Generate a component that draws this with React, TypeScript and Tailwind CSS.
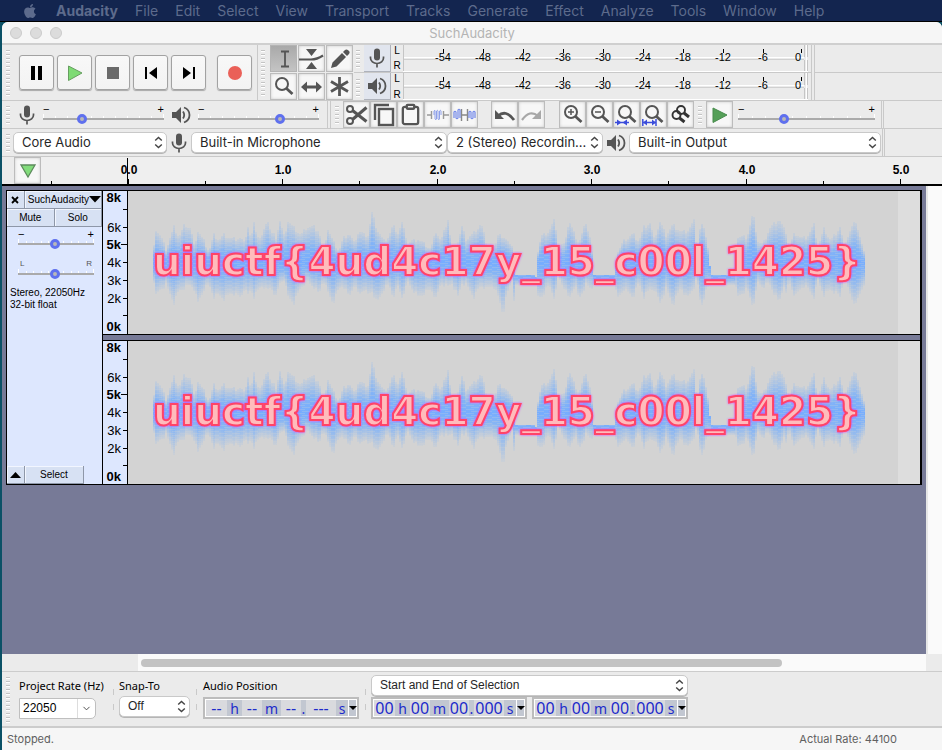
import type { ReactNode } from 'react';
import { Clipboard, ChevronDown } from 'lucide-react';
import { FaApple } from 'react-icons/fa';

const DARK = '#555555';

/* ---------- small shared pieces ---------- */

function Grip({ rows }: { rows: number }) {
  return (
    <div aria-hidden className="flex w-1 shrink-0 flex-col justify-center gap-[3px]">
      {Array.from({ length: rows }, (_, i) => (
        <span key={i} className="h-px w-1 bg-[#c4c4c4] shadow-[0_1px_0_#ffffff]" />
      ))}
    </div>
  );
}

function ToolButton({ label, active, children }: { label: string; active?: boolean; children: ReactNode }) {
  return (
    <button
      type="button"
      aria-label={label}
      className={`flex h-[27px] w-[27px] shrink-0 items-center justify-center border ${
        active
          ? 'border-[#b4b4b4] bg-linear-to-b from-[#a9a9a9] to-[#c4c4c4]'
          : 'border-[#bcbcbc] bg-[#f7f7f7] shadow-[inset_0_0_3px_#c8c8c8]'
      }`}
    >
      {children}
    </button>
  );
}

function TransportButton({ label, children }: { label: string; children: ReactNode }) {
  return (
    <button
      type="button"
      aria-label={label}
      className="flex h-[35px] w-[35px] shrink-0 items-center justify-center rounded-[3px] border border-[#a2a2a2] bg-linear-to-b from-[#f8f8f8] to-[#f3f3f3] shadow-[0_1px_1px_#a8a8a8]"
    >
      <svg width="20" height="20" viewBox="0 0 20 20">{children}</svg>
    </button>
  );
}

function Slider({
  label, value, ticks, low = '−', high = '+', small,
}: { label: string; value: number; ticks: number; low?: string; high?: string; small?: boolean }) {
  return (
    <div className="flex min-w-0 flex-1 flex-col">
      <div
        aria-hidden
        className={`flex h-[10px] justify-between leading-[10px] ${
          small ? 'px-[2px] text-[8px] text-[#555555]' : 'text-[11px] text-black'
        }`}
      >
        <span>{low}</span>
        <span>{high}</span>
      </div>
      <div aria-hidden className="flex h-1 items-end justify-between">
        {Array.from({ length: ticks }, (_, i) => (
          <span key={i} className={`w-px bg-white ${i === 0 || i === ticks - 1 ? 'h-1' : 'h-[2px]'}`} />
        ))}
      </div>
      <input
        type="range"
        aria-label={label}
        defaultValue={value}
        className="-mt-[5px] block h-[12px] w-full appearance-none bg-transparent [&::-webkit-slider-runnable-track]:h-[2px] [&::-webkit-slider-runnable-track]:bg-[#aaaaaa] [&::-webkit-slider-thumb]:-mt-[4px] [&::-webkit-slider-thumb]:h-[10px] [&::-webkit-slider-thumb]:w-[10px] [&::-webkit-slider-thumb]:appearance-none [&::-webkit-slider-thumb]:rounded-full [&::-webkit-slider-thumb]:border-[3px] [&::-webkit-slider-thumb]:border-[#5f70ee] [&::-webkit-slider-thumb]:bg-[#b8b8b8]"
      />
    </div>
  );
}

function Picker({ label, value, font, className }: { label: string; value: string; font: string; className: string }) {
  return (
    <div className={`relative ${className}`}>
      <select
        aria-label={label}
        className={`block h-[21px] w-full appearance-none rounded-[5px] border border-[#c9c9c9] bg-white pr-4 pl-2 text-[#262626] shadow-[0_1px_0_#b5b5b5] ${font}`}
      >
        <option>{value}</option>
      </select>
      <svg className="pointer-events-none absolute top-[4px] right-1" width="9" height="13" viewBox="0 0 9 13" fill="none" stroke="#444444" strokeWidth="1.4">
        <path d="M1.2 4.6 4.5 1.4 7.8 4.6M1.2 8.4 4.5 11.6 7.8 8.4" />
      </svg>
    </div>
  );
}

function SpeakerIcon({ size = 20 }: { size?: number }) {
  return (
    <svg width={size} height={size} viewBox="0 0 20 20" fill="none" stroke={DARK} className="shrink-0">
      <path d="M1 7h4l5-5v16l-5-5H1z" fill={DARK} stroke="none" />
      <path d="M12 6.5q2.4 3.5 0 7" strokeWidth="1.8" />
      <path d="M13 2.5q5.500 2 5.500 7.500t-5.500 7.500" strokeWidth="1.8" />
    </svg>
  );
}

function MicIcon() {
  return (
    <svg width="18" height="20" viewBox="0 0 18 20" fill="none" stroke={DARK} className="shrink-0">
      <rect x="6" y="0.500" width="6" height="12" rx="3" fill={DARK} stroke="none" />
      <path d="M2.500 8.500v1.500a6.500 5.500 0 0 0 13 0V8.500M9 15.500v4" strokeWidth="1.7" />
    </svg>
  );
}

function Magnifier({ children }: { children?: ReactNode }) {
  return (
    <svg width="23" height="23" viewBox="0 0 23 23" fill="none" stroke={DARK}>
      <circle cx="10" cy="9" r="6" strokeWidth="2" />
      <path d="m14.500 13.500 6 5.500" strokeWidth="2.8" />
      {children}
    </svg>
  );
}

/* ---------- menu and title ---------- */

const MENUS = ['File', 'Edit', 'Select', 'View', 'Transport', 'Tracks', 'Generate', 'Effect', 'Analyze', 'Tools', 'Window', 'Help'];

function MenuBar() {
  return (
    <nav className="flex h-[22px] shrink-0 items-center gap-[17px] border-b border-black bg-[#13254f] pl-[22px] font-['Inter',sans-serif] text-sm leading-5 text-[#5d6b8c]">
      <button type="button" aria-label="System menu" className="w-[17px]"><FaApple size={16} /></button>
      <button type="button" className="font-bold">Audacity</button>
      {MENUS.map((m) => <button type="button" key={m}>{m}</button>)}
    </nav>
  );
}

function TitleBar() {
  return (
    <header className="grid h-[23px] shrink-0 grid-cols-3 items-center rounded-t-md border-b-2 border-[#cfcfcf] bg-[#f6f6f6]">
      <div className="flex gap-2 pl-2">
        {['Close', 'Minimize', 'Zoom'].map((n) => (
          <button type="button" key={n} aria-label={`${n} window`} className="h-3 w-3 rounded-full border border-[#cbcbcb] bg-[#dcdcdc]" />
        ))}
      </div>
      <h1 className="text-center font-['Inter',sans-serif] text-[13px] leading-5 text-[#b4b4b4]">SuchAudacity</h1>
    </header>
  );
}

/* ---------- toolbars ---------- */

const DB = [-54, -48, -42, -36, -30, -24, -18, -12, -6];

function Meter({ label, children }: { label: string; children: ReactNode }) {
  return (
    <div className="flex h-7 border-b border-[#c9c9c9] pl-[2px] last:border-b-0">
      <Grip rows={5} />
      <button type="button" aria-label={label} className="ml-1 flex h-[27px] w-[27px] items-center justify-center border-r border-b border-[#aeb2bb] bg-[#e1e5ee]">
        {children}
      </button>
      <div className="flex w-3 flex-col items-center justify-between text-[10px] leading-3"><span>L</span><span>R</span></div>
      <svg width="408" height="27" viewBox="0 0 408 27" className="font-['Liberation_Sans',sans-serif] text-[11px]">
        <rect x="1" y="12" width="400" height="1" fill="#ffffff" />
        <rect x="1" y="14" width="400" height="1" fill="#d0d0d0" />
        <path d="M.5 0v27M401.500 0v12M404.500 0v12M401.500 15v12M404.500 15v12" stroke="#c5c5c5" fill="none" />
        <path d="M0 26.500h405M403.500 0v27" stroke="#ffffff" />
        {DB.map((d, i) => (
          <g key={d}>
            <rect x={40 + i * 40} y="4" width="1" height="4" />
            <text x={40 + i * 40} y="16" textAnchor="middle">{d}</text>
          </g>
        ))}
        <rect x="398" y="4" width="1" height="4" />
        <text x="395" y="16" textAnchor="middle">0</text>
      </svg>
    </div>
  );
}

function TopRow() {
  return (
    <div className="flex h-[56px] shrink-0 border-b border-[#c9c9c9]">
      <div className="flex items-center border-r border-[#c9c9c9] pr-[5px] pl-1">
        <Grip rows={12} />
        <div className="flex gap-[3px] pl-[9px]">
          <TransportButton label="Pause"><path d="M4 3h4v14H4zM11 3h4v14h-4z" /></TransportButton>
          <TransportButton label="Play"><path d="M3.500 3 17 10 3.500 17.500z" fill="#7edb74" stroke="#669e60" /></TransportButton>
          <TransportButton label="Stop"><path d="M4 4h12v12H4z" fill="#6a6a6a" /></TransportButton>
          <TransportButton label="Skip to start"><path d="M4 4h2v12H4zM16 4v12l-8-6z" /></TransportButton>
          <TransportButton label="Skip to end"><path d="M14 4h2v12h-2zM4 4v12l8-6z" /></TransportButton>
        </div>
        <div className="pl-[11px]">
          <TransportButton label="Record"><circle cx="10" cy="10" r="7" fill="#ea6058" /></TransportButton>
        </div>
      </div>
      <div className="flex gap-[5px] pl-[3px]">
        <Grip rows={12} />
        <div className="grid grid-cols-3 gap-px">
          <ToolButton label="Selection tool" active>
            <svg width="23" height="23" viewBox="0 0 23 23" stroke={DARK} fill="none" strokeWidth="1.8"><path d="M13 4.500v15M9 4.500h8M9 19.500h8" /></svg>
          </ToolButton>
          <ToolButton label="Envelope tool">
            <svg width="25" height="23" viewBox="0 0 25 23" fill={DARK}>
              <path d="M7 2h11l-5.500 7zM7 22h11l-5.500-7z" />
              <path d="M0 12.500h12q6 0 12-4" stroke={DARK} strokeWidth="2.200" fill="none" />
            </svg>
          </ToolButton>
          <ToolButton label="Draw tool">
            <svg width="23" height="23" viewBox="0 0 23 23" fill={DARK}><path d="m3 21 1.500-5.500L14 6l4 4L8.500 19.500zM15 5l2-2q1.500-1 3.500.5t.5 3.500l-2 2z" /></svg>
          </ToolButton>
          <ToolButton label="Zoom tool"><Magnifier /></ToolButton>
          <ToolButton label="Time shift tool">
            <svg width="23" height="23" viewBox="0 0 23 23" fill={DARK}><path d="m1 12 6-5.500v4h9v-4l6 5.500-6 5.500v-4H7v4z" /></svg>
          </ToolButton>
          <ToolButton label="Multi-tool">
            <svg width="23" height="23" viewBox="0 0 23 23" stroke={DARK} strokeWidth="2.800"><path d="M11.500 2v19M3 6.500l17 10M20 6.500l-17 10" /></svg>
          </ToolButton>
        </div>
      </div>
      <div className="ml-px border-r border-[#c9c9c9]">
        <Meter label="Recording meter"><MicIcon /></Meter>
        <Meter label="Playback meter"><SpeakerIcon /></Meter>
      </div>
      <div className="ml-[2px] flex-1 border-l border-[#c9c9c9]"><div className="h-7 border-b border-[#c9c9c9]" /></div>
    </div>
  );
}

function MixerRow() {
  return (
    <div className="flex h-[28px] shrink-0 border-b border-[#c9c9c9]">
      <div className="flex w-[326px] items-center border-r border-[#c9c9c9] pl-1">
        <Grip rows={5} />
        <div className="flex flex-1 items-center gap-[7px] pr-[8px] pl-[8px]">
          <MicIcon />
          <Slider label="Recording volume" value={31} ticks={11} />
          <SpeakerIcon />
          <Slider label="Playback volume" value={69} ticks={11} />
        </div>
      </div>
      <div className="ml-[2px] flex border-l border-[#c9c9c9] pl-1">
        <Grip rows={5} />
        <div className="flex pl-1">
          <ToolButton label="Cut">
            <svg width="24" height="24" viewBox="0 0 24 24" fill="none" stroke={DARK} strokeWidth="2">
              <circle cx="5" cy="6" r="3" /><circle cx="5" cy="18" r="3" />
              <path d="m7.500 7.500 14 11M7.500 16.500l14-12" strokeWidth="3" />
            </svg>
          </ToolButton>
          <ToolButton label="Copy">
            <svg width="24" height="24" viewBox="0 0 24 24" fill="none" stroke={DARK} strokeWidth="2.400"><rect x="7" y="6" width="14" height="16" /><path d="M3 17V2h14" /></svg>
          </ToolButton>
          <ToolButton label="Paste"><Clipboard size={23} color={DARK} strokeWidth={2.4} /></ToolButton>
          <ToolButton label="Trim audio">
            <svg width="23" height="20" viewBox="0 0 23 20" fill="none"><path d="M1 10h5M18 10h5M5.500 6v8M17.500 6v8" stroke="#999999" strokeWidth="1.400" /><path d="M8 10V6q1-1.500 1 0v8q1 1.500 1.500 0V6q1-1.500 1.500 0v8q1 1.500 1.500 0V6q1-1.500 1.500 0v4" stroke="#8ea0ea" /></svg>
          </ToolButton>
          <ToolButton label="Silence audio">
            <svg width="23" height="20" viewBox="0 0 23 20" fill="none"><path d="M9 10h5M8.500 4v12M14.500 4v12" stroke="#888888" strokeWidth="1.400" /><path d="M1 13V7q1-1.500 2 0v6q1 1.500 2 0V5q1-1.500 2 0v8M16 13V7q1-1.500 2 0v6q1 1.500 2 0V7q1-1.500 2 0v6" stroke="#7187e8" strokeWidth="1.200" /></svg>
          </ToolButton>
        </div>
        <div className="flex pl-[13px]">
          <ToolButton label="Undo">
            <svg width="23" height="20" viewBox="0 0 23 20" fill={DARK}><path d="M2 5v9h9z" /><path d="M5 11q8-7 16 4" fill="none" stroke={DARK} strokeWidth="2.800" /></svg>
          </ToolButton>
          <ToolButton label="Redo">
            <svg width="23" height="20" viewBox="0 0 23 20" fill="#a8a8a8"><path d="M21 5v9h-9z" /><path d="M18 11q-8-7-16 4" fill="none" stroke="#a8a8a8" strokeWidth="2.200" /></svg>
          </ToolButton>
        </div>
        <div className="flex pl-[14px]">
          <ToolButton label="Zoom in"><Magnifier><path d="M10 6v6M7 9h6" strokeWidth="1.500" /></Magnifier></ToolButton>
          <ToolButton label="Zoom out"><Magnifier><path d="M7 9h6" strokeWidth="1.500" /></Magnifier></ToolButton>
          <ToolButton label="Fit selection"><Magnifier><path d="M0 19.500h14" stroke="#3b4ddb" strokeWidth="1.500" /><path d="M2 16.500v6l4.500-3zM12 16.500v6l-4.500-3z" fill="#3b4ddb" stroke="none" /></Magnifier></ToolButton>
          <ToolButton label="Fit project"><Magnifier><path d="M.8 16v7M14 16v7M1 19.500h13" stroke="#3b4ddb" strokeWidth="1.500" /><path d="M5 16.500v6l-4-3zM10 16.500v6l4-3z" fill="#3b4ddb" stroke="none" /></Magnifier></ToolButton>
          <ToolButton label="Zoom toggle">
            <svg width="23" height="23" viewBox="0 0 23 23" fill="none" stroke="#333333" strokeWidth="1.900"><circle cx="12" cy="7" r="4" /><circle cx="7.500" cy="12" r="4" /><path d="m15 10 5 4M10.500 15l5 4" strokeWidth="3" /></svg>
          </ToolButton>
        </div>
      </div>
      <div className="flex w-[188px] border-r border-[#c9c9c9] pl-1">
        <Grip rows={5} />
        <div className="flex flex-1 items-center pr-[6px] pl-1">
          <ToolButton label="Play at speed"><svg width="18" height="18" viewBox="0 0 18 18"><path d="M2 2 16 9 2 16.500z" fill="#55a058" stroke="#488b4d" /></svg></ToolButton>
          <div className="flex flex-1 pl-[5px]"><Slider label="Playback speed" value={32} ticks={11} /></div>
        </div>
      </div>
      <div className="ml-px border-l border-[#c9c9c9]" />
    </div>
  );
}

function DeviceRow() {
  const font = "font-['Inter',sans-serif] text-[13px] leading-[19px]";
  return (
    <div className="flex h-[28px] shrink-0 border-b border-[#c9c9c9]">
      <div className="flex w-[881px] items-center border-r border-[#c9c9c9] pl-1">
        <Grip rows={5} />
        <Picker label="Audio host" value="Core Audio" font={font} className="ml-[3px] w-[154px]" />
        <span className="px-[3px]"><MicIcon /></span>
        <Picker label="Recording device" value="Built-in Microphone" font={font} className="w-[256px]" />
        <Picker label="Recording channels" value="2 (Stereo) Recordin..." font={font} className="w-[156px]" />
        <span className="px-[3px]"><SpeakerIcon /></span>
        <Picker label="Playback device" value="Built-in Output" font={font} className="w-[252px]" />
      </div>
      <div className="ml-px border-l border-[#c9c9c9]" />
    </div>
  );
}

/* ---------- timeline and track ---------- */

const SECOND = 154.4;

function Timeline() {
  return (
    <div className="flex h-[29px] shrink-0 border-b-2 border-black bg-[#efefef]">
      <div className="w-3 bg-[#ebebeb]" />
      <ToolButton label="Pinned play head">
        <svg width="18" height="16" viewBox="0 0 18 16"><path d="M2 2h14L9 14z" fill="#82dc7b" stroke="#5d8a5d" strokeWidth="1.300" /></svg>
      </ToolButton>
      <svg width="899" height="27" viewBox="0 0 899 27" className="min-w-0 font-['Liberation_Sans',sans-serif] text-xs font-bold">
        <path d="M86.500 1v26" stroke="#000000" />
        <rect x="10" y="24" width="1" height="3" />
        {[0, 1, 2, 3, 4, 5].map((s) => (
          <g key={s}>
            <rect x={Math.round(87 + s * SECOND)} y="22" width="1" height="5" />
            {s < 5 && <rect x={Math.round(164 + s * SECOND)} y="24" width="1" height="3" />}
            <text x={Math.round(88 + s * SECOND)} y="17" textAnchor="middle">{s}.0</text>
          </g>
        ))}
      </svg>
    </div>
  );
}

/* Envelope of the spectrum: [x, upper edge, lower edge] in view pixels. */
const ENVELOPE: number[][] = [
  [25, 56, 90], [27, 38, 105], [32, 46, 98], [37, 58, 94], [45, 36, 112], [50, 46, 100], [56, 33, 96], [62, 38, 94], [65, 55, 98], [69, 40, 112],
  [75, 50, 98], [80, 60, 94], [85, 44, 106], [90, 49, 104], [95, 44, 108], [102, 48, 102], [112, 47, 106], [115, 52, 98], [119, 35, 104], [122, 48, 98],
  [125, 33, 106], [130, 48, 98], [134, 44, 94], [138, 26, 100], [142, 42, 96], [147, 46, 106], [151, 30, 92], [155, 45, 88], [159, 30, 106], [165, 37, 112],
  [172, 44, 96], [178, 36, 90], [185, 36, 96], [190, 40, 104], [194, 60, 88], [199, 38, 102], [204, 50, 112], [210, 60, 98], [214, 48, 94], [220, 42, 106],
  [225, 52, 94], [230, 40, 104], [235, 44, 98], [239, 44, 104], [243, 22, 100], [248, 38, 112], [255, 50, 98], [260, 45, 94], [264, 34, 106], [269, 42, 96],
  [273, 32, 106], [279, 52, 92], [289, 48, 106], [302, 58, 98], [307, 40, 108], [312, 50, 92], [319, 28, 96], [323, 60, 92], [329, 50, 106], [333, 36, 92],
  [337, 48, 94], [345, 42, 106], [352, 33, 94], [357, 50, 98], [364, 60, 94], [370, 40, 108], [374, 50, 124], [377, 46, 108], [383, 56, 88], [385, 68, 108],
  [387, 84, 94], [407, 84, 94], [409, 60, 106], [412, 46, 106], [420, 40, 94], [426, 28, 108], [429, 54, 86], [435, 54, 96], [440, 30, 108], [446, 44, 94],
  [450, 52, 108], [457, 31, 94], [462, 50, 98], [465, 84, 94], [486, 84, 94], [488, 62, 108], [495, 50, 98], [504, 43, 106], [510, 50, 92], [515, 36, 106],
  [521, 32, 98], [525, 48, 98], [531, 31, 112], [537, 44, 98], [544, 34, 114], [552, 41, 96], [558, 40, 108], [565, 30, 96], [568, 58, 88], [572, 31, 116],
  [578, 46, 98], [582, 84, 94], [606, 84, 94], [609, 46, 106], [618, 46, 98], [624, 22, 116], [629, 50, 92], [634, 54, 96], [640, 38, 92], [650, 28, 112],
  [655, 38, 94], [656, 36, 108], [660, 56, 90], [666, 42, 106], [674, 48, 94], [679, 44, 98], [685, 34, 106], [689, 56, 90], [695, 38, 104], [702, 50, 98],
  [711, 36, 106], [715, 54, 86], [722, 38, 106], [727, 30, 114], [732, 50, 100], [737, 70, 88],
];

const COLUMNS = Array.from({ length: 356 }, (_, i) => {
  const x = 25 + i * 2;
  const n = ENVELOPE.findIndex((p) => p[0] > x);
  const b = n < 0 ? ENVELOPE[ENVELOPE.length - 1] : ENVELOPE[n];
  const a = n < 1 ? b : ENVELOPE[n - 1];
  const t = b[0] === a[0] ? 0 : (x - a[0]) / (b[0] - a[0]);
  const quiet = a[1] === 84 && b[1] === 84;
  const jitter = quiet ? 0 : ((i * 7919) % 5) - 2;
  return { x, top: a[1] + (b[1] - a[1]) * t + jitter, bottom: a[2] + (b[2] - a[2]) * t - jitter };
});

function Spectrogram({ id }: { id: string }) {
  return (
    <svg className="h-[143px] min-w-0 flex-1 bg-[#dddddd]" viewBox="0 0 793 143" preserveAspectRatio="xMinYMid slice" role="img" aria-label="Spectrogram">
      <defs>
        <linearGradient id={`${id}-up`} x1="0" y1="0" x2="0" y2="1">
          <stop offset="0" stopColor="#86b6f4" stopOpacity="0.15" />
          <stop offset="0.6" stopColor="#7ab0fa" stopOpacity="0.9" />
          <stop offset="1" stopColor="#76adff" />
        </linearGradient>
        <linearGradient id={`${id}-down`} x1="0" y1="1" x2="0" y2="0">
          <stop offset="0" stopColor="#86b6f4" stopOpacity="0.1" />
          <stop offset="0.6" stopColor="#7ab0fa" stopOpacity="0.85" />
          <stop offset="1" stopColor="#76adff" />
        </linearGradient>
        <pattern id={`${id}-lines`} width="13" height="4" patternUnits="userSpaceOnUse">
          <path d="M0 .5h8M5 2.500h8" stroke="#d3d3d3" strokeOpacity="0.250" />
        </pattern>
      </defs>
      <rect width="770" height="143" fill="#d3d3d3" />
      {COLUMNS.map((c) => {
        const mid = Math.min(Math.max(72, c.top), c.bottom);
        return (
          <g key={c.x} shapeRendering="crispEdges">
            <rect x={c.x} y={c.top} width="2" height={mid - c.top} fill={`url(#${id}-up)`} />
            <rect x={c.x} y={mid} width="2" height={c.bottom - mid} fill={`url(#${id}-down)`} />
          </g>
        );
      })}
      <rect x="24" y="20" width="716" height="106" fill={`url(#${id}-lines)`} />
      <text
        x="25"
        y="84"
        className="font-['DejaVu_Sans',sans-serif] text-[39px] font-bold drop-shadow-[0_0_1px_#e03cff]"
        fill="#ffbcbc"
        stroke="#ff4468"
        strokeWidth="2"
      >
        {'uiuctf{4ud4c17y_15_c00l_1425}'}
      </text>
    </svg>
  );
}

const FREQUENCIES: { label: string; y: number; bold?: boolean }[] = [
  { label: '8k', y: 11, bold: true }, { label: '6k', y: 41 }, { label: '5k', y: 58, bold: true }, { label: '4k', y: 76 },
  { label: '3k', y: 94 }, { label: '2k', y: 112 }, { label: '0k', y: 140, bold: true },
];

function Channel({ id }: { id: string }) {
  return (
    <div className="flex border-y border-black">
      <svg width="24" height="143" viewBox="0 0 24 143" className="shrink-0 bg-[#dde7fe] font-['Liberation_Sans',sans-serif] text-[13px]">
        {FREQUENCIES.map((f) => (
          <text key={f.label} x="18" y={f.y} textAnchor="end" fontWeight={f.bold ? 700 : 400}>{f.label}</text>
        ))}
        <path d="M20 18.500h4M20 36.500h4M18 53.500h6M20 71.500h4M20 89.500h4M20 107.500h4M20 124.500h4" stroke="#000000" />
      </svg>
      <div className="w-px bg-black" />
      <Spectrogram id={id} />
    </div>
  );
}

function TrackPanel() {
  const btn = 'border-r border-b border-[#8e97a8] bg-[#d7e1f3] text-[11px] leading-4 shadow-[inset_1px_1px_0_#f2f6ff]';
  return (
    <section className="flex w-[96px] shrink-0 flex-col border-r border-black bg-[#dde7fe] font-['Liberation_Sans',sans-serif]">
      <div className="flex h-[18px]">
        <button type="button" aria-label="Close track" className={`flex w-[18px] items-center justify-center ${btn}`}>
          <svg width="8" height="8" viewBox="0 0 8 8" stroke="#000000" strokeWidth="1.800"><path d="m1 1 6 6M7 1 1 7" /></svg>
        </button>
        <button type="button" className={`flex flex-1 items-center pl-[3px] whitespace-nowrap ${btn}`}>
          <span className="text-[10px]">SuchAudacity</span>
          <svg width="12" height="7" viewBox="0 0 12 7"><path d="M0 0h12L6 6.500z" /></svg>
        </button>
      </div>
      <div className="grid h-[18px] grid-cols-2">
        <button type="button" className={btn}><span className="text-[10px]">Mute</span></button>
        <button type="button" className={btn}><span className="text-[10px]">Solo</span></button>
      </div>
      <div className="flex flex-col gap-[9px] pt-[2px] pr-[8px] pl-[11px]">
        <Slider label="Gain" value={49} ticks={11} />
        <Slider label="Pan" value={49} ticks={11} low="L" high="R" small />
      </div>
      <p className="pt-[7px] pl-[3px] text-[10px] leading-3">Stereo, 22050Hz<br />32-bit float</p>
      <div className="mt-auto flex h-[18px]">
        <button type="button" aria-label="Collapse track" className={`flex w-[18px] items-center justify-center ${btn}`}>
          <svg width="11" height="6" viewBox="0 0 11 6"><path d="M0 6h11L5.500 0z" /></svg>
        </button>
        <button type="button" className={`w-[59px] ${btn}`}><span className="text-[10px]">Select</span></button>
      </div>
    </section>
  );
}

function TrackArea() {
  return (
    <main className="flex flex-1 bg-[#777a97]">
      <div className="min-w-0 flex-1 pt-1 pr-1 pl-1">
        <div className="flex border border-r-2 border-black">
          <TrackPanel />
          <div className="-my-px flex min-w-0 flex-1 flex-col gap-[5px]">
            <Channel id="left" />
            <Channel id="right" />
          </div>
        </div>
      </div>
      <div className="w-4 shrink-0 border-l-2 border-[#e6e6e6] bg-[#fafafa]" />
    </main>
  );
}

/* ---------- bottom bars ---------- */

const SEGMENTS = ['w-[21px]', 'w-[20px]', 'w-[20px]', 'w-[30px]'];
const UNITS: [string, string][] = [['h', 'w-[15px]'], ['m', 'w-[19px]'], ['.', 'w-[5px]'], ['s', 'w-[12px]']];

function TimeField({ label, values }: { label: string; values: string[] }) {
  return (
    <div role="group" aria-label={label} className="flex h-[22px] w-[156px] border-2 border-[#bcbcbc] bg-white p-px font-['Noto_Sans',sans-serif] text-base leading-4 text-[#1d2bcb]">
      {values.map((v, i) => (
        <div key={i} className="flex bg-[#c2c7d1]">
          <input aria-label={`${label} ${i + 1}`} defaultValue={v} className={`h-4 bg-[#d9dade] p-0 text-center ${SEGMENTS[i]}`} />
          <span className={`text-center text-sm leading-[17px] ${UNITS[i][1]}`}>{UNITS[i][0]}</span>
        </div>
      ))}
      <button type="button" aria-label={`${label} format`} className="ml-px flex w-[7px] items-center justify-center bg-[#c2c7d1]">
        <svg width="8" height="4" viewBox="0 0 8 4" className="shrink-0"><path d="M0 0h8L4 4z" /></svg>
      </button>
    </div>
  );
}

function Divider() {
  return <div aria-hidden className="flex w-px flex-col justify-around py-3"><span className="h-[6px] bg-[#c9c9c9]" /><span className="h-[6px] bg-[#c9c9c9]" /></div>;
}

function SelectionBar() {
  const helv = "font-['Liberation_Sans',sans-serif] text-xs leading-[19px]";
  return (
    <div className="flex h-[57px] shrink-0 border-t border-b-2 border-[#cccccc] pl-1 font-['Noto_Sans',sans-serif] text-[11px] leading-4">
      <Grip rows={12} />
      <div className="ml-[9px] w-[94px] pt-[6px]">
        <label htmlFor="rate" className="block h-5 whitespace-nowrap">Project Rate (Hz)</label>
        <div className="flex h-[21px] w-[77px] overflow-hidden rounded-r-[5px] border border-[#bfbfbf] bg-white">
          <input id="rate" defaultValue="22050" className={`w-[58px] border-r border-[#dddddd] pl-[3px] ${helv}`} />
          <button type="button" aria-label="Choose project rate" className="flex flex-1 items-center justify-center"><ChevronDown size={11} color="#444444" /></button>
        </div>
      </div>
      <Divider />
      <div className="w-[82px] pt-[6px] pl-[5px]">
        <div className="h-[18px]">Snap-To</div>
        <Picker label="Snap-To" value="Off" font={helv} className="w-[71px]" />
      </div>
      <Divider />
      <div className="w-[168px] pt-[6px] pl-[6px]">
        <div className="h-[19px]">Audio Position</div>
        <TimeField label="Audio Position" values={['--', '--', '--', '---']} />
      </div>
      <Divider />
      <div className="w-[323px] pt-[3px] pl-[5px]">
        <Picker label="Selection display" value="Start and End of Selection" font={helv} className="w-[317px]" />
        <div className="flex gap-[5px] pt-px">
          <TimeField label="Selection start" values={['00', '00', '00', '000']} />
          <TimeField label="Selection end" values={['00', '00', '00', '000']} />
        </div>
      </div>
    </div>
  );
}

export default function App() {
  return (
    <div className="flex min-h-screen flex-col bg-[#0b5166]">
      <MenuBar />
      <div className="ml-[2px] flex flex-1 flex-col rounded-t-md bg-[#ebebeb] font-['Liberation_Sans',sans-serif] text-black">
        <TitleBar />
        <TopRow />
        <MixerRow />
        <DeviceRow />
        <Timeline />
        <TrackArea />
        <div className="flex h-[17px] shrink-0 pr-4 pl-[136px]">
          <div className="flex-1 bg-[#fafafa] px-[3px] pt-[5px]"><div className="h-2 w-[82%] rounded-full bg-[#c3c3c3]" /></div>
        </div>
        <SelectionBar />
        <footer className="flex h-[22px] shrink-0 items-center justify-between bg-[#f6f6f6] pr-[45px] pl-[5px] font-['Inter',sans-serif] text-[11px] leading-4 text-[#606060]">
          <span>Stopped.</span>
          <span>Actual Rate: 44100</span>
        </footer>
      </div>
    </div>
  );
}
